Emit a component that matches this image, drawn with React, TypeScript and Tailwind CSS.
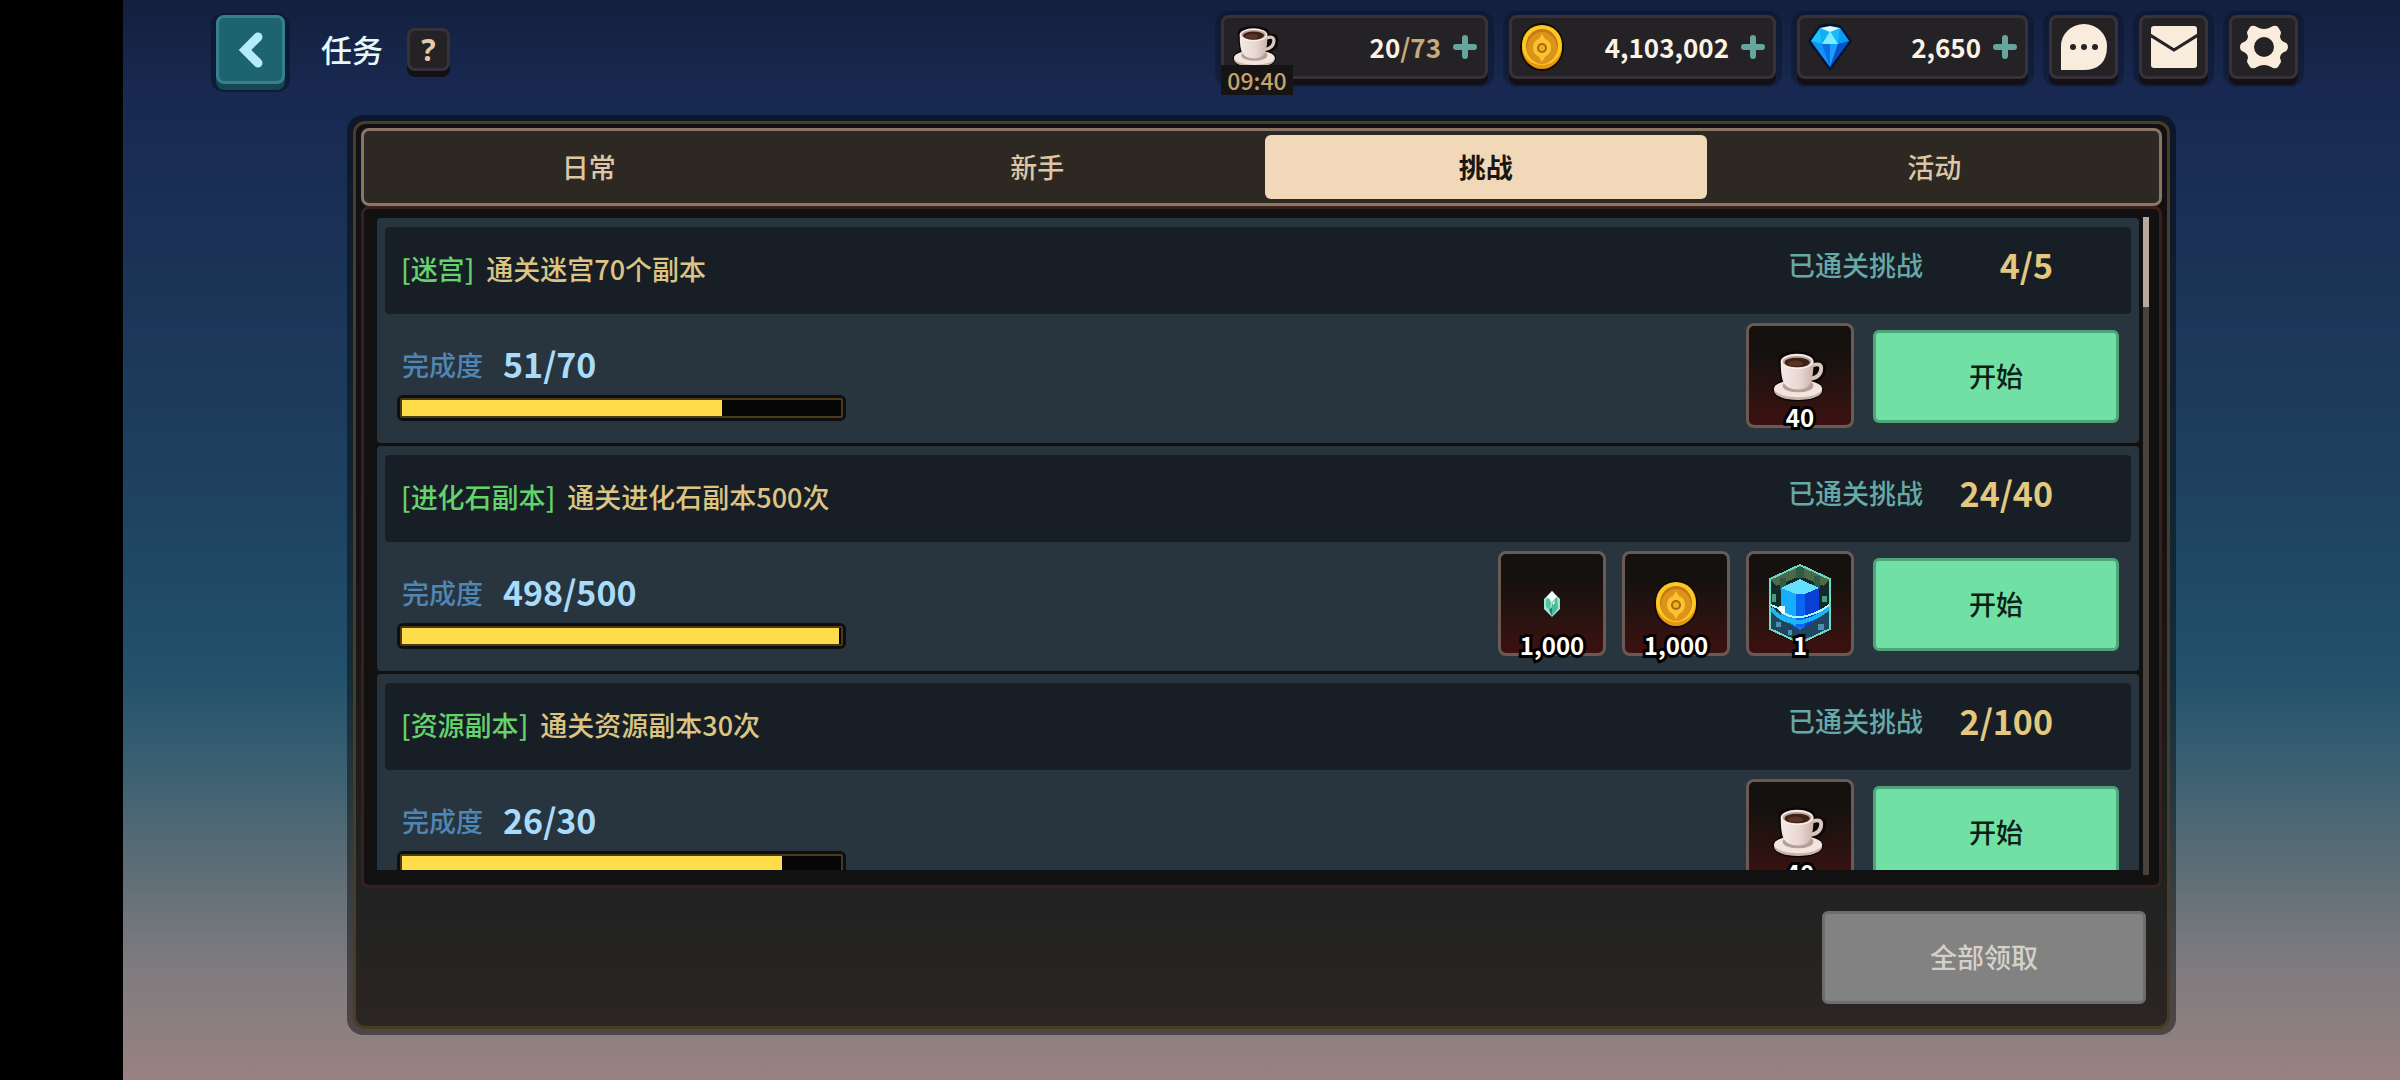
const TABS = ["日常", "新手", "挑战", "活动"];

const NUM = "font-['Noto_Sans_CJK_SC',sans-serif] font-bold";

type Reward = { kind: "coffee" | "gem" | "coin" | "cube"; amount: string };

type Quest = {
  tag: string;
  title: string;
  cleared: string;
  done: number;
  total: number;
  rewards: Reward[];
};

const QUESTS: Quest[] = [
  {
    tag: "迷宫",
    title: "通关迷宫70个副本",
    cleared: "4/5",
    done: 51,
    total: 70,
    rewards: [{ kind: "coffee", amount: "40" }],
  },
  {
    tag: "进化石副本",
    title: "通关进化石副本500次",
    cleared: "24/40",
    done: 498,
    total: 500,
    rewards: [
      { kind: "gem", amount: "1,000" },
      { kind: "coin", amount: "1,000" },
      { kind: "cube", amount: "1" },
    ],
  },
  {
    tag: "资源副本",
    title: "通关资源副本30次",
    cleared: "2/100",
    done: 26,
    total: 30,
    rewards: [{ kind: "coffee", amount: "40" }],
  },
];

function CoffeeIcon({ className }: { className?: string }) {
  return (
    <svg viewBox="0 0 58 54" className={className} aria-hidden="true">
      <defs>
        <linearGradient id="cup" x1="0" x2="1">
          <stop offset="0" stopColor="#f6eae6" />
          <stop offset="0.6" stopColor="#e8d5d0" />
          <stop offset="1" stopColor="#c9b2ac" />
        </linearGradient>
      </defs>
      <g stroke="#0b0807" strokeWidth="5" fill="#0b0807" strokeLinejoin="round">
        <ellipse cx="27" cy="41" rx="24" ry="10" />
        <path d="M9 11 Q9 4 26 4 Q43 4 43 11 L42 36 L12 36 Z" />
        <path d="M43 14 Q54 11 54 19 Q54 30 41 32" />
      </g>
      <ellipse cx="27" cy="42" rx="25" ry="10" fill="#c9b4ad" />
      <ellipse cx="27" cy="40" rx="25" ry="9" fill="#f3e5de" />
      <ellipse cx="27" cy="37" rx="16" ry="7" fill="#b5a09a" />
      <path d="M42 16 Q51 13 51 19 Q51 28 40 30" fill="none" stroke="#dbc5be" strokeWidth="4" />
      <path d="M9 12 Q9 28 12 34 Q16 41 27 41 Q37 41 40 34 Q43 28 43 12 Z" fill="url(#cup)" />
      <ellipse cx="26" cy="12" rx="17" ry="8" fill="#f8ede8" />
      <ellipse cx="26" cy="12" rx="15" ry="6" fill="#bfa59b" />
      <ellipse cx="26" cy="13" rx="13" ry="5" fill="#3b2117" />
      <ellipse cx="24" cy="14" rx="8" ry="3" fill="#5b3424" />
    </svg>
  );
}

function CoinIcon({ className }: { className?: string }) {
  return (
    <svg viewBox="0 0 44 48" className={className} aria-hidden="true">
      <ellipse cx="22" cy="24" rx="22" ry="24" fill="#120b04" />
      <ellipse cx="22" cy="25" rx="20" ry="21" fill="#e8960f" />
      <ellipse cx="22" cy="22" rx="20" ry="20" fill="#fcc822" />
      <ellipse cx="22" cy="23" rx="16" ry="17" fill="#c47a14" />
      <ellipse cx="22" cy="25" rx="15" ry="16" fill="#dd931b" />
      <path d="M22 11 L25 16 Q31 18 31 25 Q31 31 25 34 L22 39 L19 34 Q13 31 13 25 Q13 18 19 16 Z" fill="#fbc330" />
      <circle cx="22" cy="25" r="5" fill="#a8680f" />
      <circle cx="22" cy="25" r="3" fill="#eab02a" />
    </svg>
  );
}

function DiamondIcon({ className }: { className?: string }) {
  return (
    <svg viewBox="0 0 44 48" className={className} aria-hidden="true">
      <path d="M12 3 Q22 0 32 3 L43 18 L22 47 L1 18 Z" fill="#07142e" stroke="#07142e" strokeWidth="2" strokeLinejoin="round" />
      <path d="M12 5 L32 5 L41 18 L22 44 L3 18 Z" fill="#0a84f0" />
      <path d="M12 5 L3 18 L14 21 Z" fill="#19c4ff" />
      <path d="M32 5 L41 18 L30 21 Z" fill="#0b9cf5" />
      <path d="M12 5 L22 8 L14 21 Z" fill="#12aefc" />
      <path d="M32 5 L22 8 L30 21 Z" fill="#18b9ff" />
      <path d="M22 8 L14 21 L30 21 Z" fill="#7cecff" />
      <path d="M12 5 L22 3 L32 5 L22 9 Z" fill="#d5faff" />
      <path d="M3 18 L14 21 L22 44 Z" fill="#1492fb" />
      <path d="M14 21 L22 21 L22 44 Z" fill="#0a6fe4" />
      <path d="M22 21 L30 21 L22 44 Z" fill="#1e9dff" />
      <path d="M30 21 L41 18 L22 44 Z" fill="#0752c6" />
    </svg>
  );
}

function GemIcon({ className }: { className?: string }) {
  return (
    <svg viewBox="0 0 18 28" className={className} aria-hidden="true">
      <path d="M9 1 L17 9 L17 19 L9 27 L1 19 L1 9 Z" fill="#9fe6d2" />
      <path d="M9 1 L14 7 L9 12 L4 7 Z" fill="#f6fffd" />
      <path d="M9 12 L14 7 L15 18 L9 26 Z" fill="#4fb89d" />
      <path d="M3 10 L6 8 L8 13 L7 20 L3 17 Z" fill="#5cc0a6" />
      <path d="M6 20 L9 17 L9 26 Z" fill="#1f7f68" />
      <path d="M9 13 L12 10 L11 15 Z" fill="#d6fff4" />
    </svg>
  );
}

function CubeIcon({ className }: { className?: string }) {
  return (
    <svg viewBox="0 0 64 80" className={className} shapeRendering="crispEdges" aria-hidden="true">
      <path d="M32 1 L62 15 L62 65 L32 79 L2 65 L2 15 Z" fill="#122a2a" />
      <path d="M32 1 L62 15 L56 22 L32 12 L8 22 L2 15 Z" fill="#4d6a48" />
      <path d="M28 3 H36 V14 H28 Z M12 14 H18 V26 H12 Z M46 12 H52 V24 H46 Z" fill="#2f5a44" />
      <path d="M4 30 H8 V38 H4 Z M54 32 H59 V38 H54 Z" fill="#4a9a7c" />
      <path d="M2 44 L32 56 L62 44 L62 65 L32 79 L2 65 Z" fill="#204560" />
      <path d="M8 58 H13 V63 H8 Z M50 60 H56 V66 H50 Z M20 66 H24 V71 H20 Z" fill="#4d8fae" />
      <path d="M32 15 L51 26 L51 54 L32 66 L13 54 L13 26 Z" fill="#0c78f2" />
      <path d="M32 15 L51 24 L41 30 L22 30 L13 24 Z" fill="#62e2ff" />
      <path d="M13 24 L28 30 L28 62 L13 54 Z" fill="#16adff" />
      <path d="M28 30 H37 V63 H28 Z" fill="#0a66f0" />
      <path d="M37 30 L51 24 L51 54 L37 63 Z" fill="#0a3fd6" />
      <path d="M3 44 Q14 60 34 58 Q50 54 61 44" fill="none" stroke="#1cb6f5" strokeWidth="4" />
      <path d="M3 41 L10 44 Q20 55 34 53 Q50 50 61 41" fill="none" stroke="#aef4ff" strokeWidth="2" />
      <path d="M11 42 H17 V50 H14 V47 H11 Z" fill="#eaffff" />
      <path d="M32 1 L62 15 L62 65 L32 79 L2 65 L2 15 Z" fill="none" stroke="#69dbc0" strokeWidth="2" />
    </svg>
  );
}

function RewardIcon({ kind }: { kind: Reward["kind"] }) {
  if (kind === "coffee") return <CoffeeIcon className="w-14 h-[52px]" />;
  if (kind === "coin") return <CoinIcon className="w-11 h-12" />;
  if (kind === "gem") return <GemIcon className="w-[18px] h-7" />;
  return <CubeIcon className="w-16 h-20" />;
}

function PlusIcon() {
  return (
    <svg viewBox="0 0 24 24" className="w-6 h-6 shrink-0" aria-hidden="true">
      <path d="M12 3 V21 M3 12 H21" stroke="#66a59c" strokeWidth="6" strokeLinecap="round" />
    </svg>
  );
}

function ResourceBox({ width, icon, children }: { width: string; icon: React.ReactNode; children: React.ReactNode }) {
  return (
    <button
      type="button"
      className={`relative flex items-center h-16 px-2 rounded-lg bg-[#252226] border-[3px] border-[#37323a] shadow-[0_6px_0_#121016,0_2px_0_6px_rgba(10,14,30,0.35)] ${width}`}
    >
      {icon}
      <span className={`flex-1 pr-3 text-right text-[26px] leading-8 text-[#fbf3e6] ${NUM}`}>{children}</span>
      <PlusIcon />
    </button>
  );
}

function IconButton({ label, children }: { label: string; children: React.ReactNode }) {
  return (
    <button
      type="button"
      aria-label={label}
      className="flex items-center justify-center w-[69px] h-16 rounded-lg bg-[#252226] border-[3px] border-[#37323a] shadow-[0_6px_0_#121016,0_2px_0_6px_rgba(10,14,30,0.35)]"
    >
      {children}
    </button>
  );
}

function RewardBox({ reward }: { reward: Reward }) {
  return (
    <div className="relative flex items-center justify-center w-[108px] h-[105px] rounded-lg border-[3px] border-[#6b5a54] bg-linear-to-b from-[#14110f] from-25% to-[#3c1110]">
      <RewardIcon kind={reward.kind} />
      <span
        className={`absolute inset-x-0 -bottom-2 text-center text-2xl leading-8 text-white [paint-order:stroke_fill] [-webkit-text-stroke:6px_#000] ${NUM}`}
      >
        {reward.amount}
      </span>
    </div>
  );
}

function QuestCard({ quest }: { quest: Quest }) {
  return (
    <li className="shrink-0 h-[225px] px-2 pt-[9px] rounded-sm bg-[#29353e]">
      <div className="flex items-center h-[87px] pl-4 pr-[78px] pb-[2px] rounded-sm bg-[#181e26] text-[27px] font-medium">
        <h2 className="flex gap-3 text-[#dcc583]">
          <span className="text-[#65d36b]">[{quest.tag}]</span>
          {quest.title}
        </h2>
        <span className="ml-auto pb-2 text-[#66a9a7]">已通关挑战</span>
        <span className={`w-[130px] pb-[10px] text-right text-[34px] leading-10 text-[#e2c97f] ${NUM}`}>{quest.cleared}</span>
      </div>
      <div className="flex items-start px-3 pt-[9px]">
        <div className="w-[449px] pt-[22px]">
          <div className="flex items-center gap-5 pl-[5px] h-10">
            <span className="text-[27px] font-medium text-[#4f86b4]">完成度</span>
            <span className={`pb-[2px] text-[34px] leading-10 text-[#a9dcfb] ${NUM}`}>
              {quest.done}/{quest.total}
            </span>
          </div>
          <div className="mt-[10px] h-[26px] rounded-md bg-[#0d0f11] p-[3px]">
            <div className="h-5 rounded-xs border-2 border-[#4a3a1a] bg-[#060606]">
              <div className="h-4 bg-[#ffdd4a]" style={{ width: `${(quest.done / quest.total) * 100}%` }} />
            </div>
          </div>
        </div>
        <div className="ml-auto flex gap-4">
          {quest.rewards.map((reward) => (
            <RewardBox key={reward.kind} reward={reward} />
          ))}
        </div>
        <button
          type="button"
          className="ml-[19px] mt-[7px] w-[246px] h-[93px] rounded-md bg-[#70e0a4] border-[3px] border-[#4fa57a] text-[27px] font-medium text-[#0c2016]"
        >
          开始
        </button>
      </div>
    </li>
  );
}

export default function App() {
  return (
    <div className="flex h-screen overflow-hidden bg-black pl-[123px] font-['Noto_Sans_CJK_SC',sans-serif]">
      <div className="flex flex-1 flex-col bg-[linear-gradient(to_bottom,#141f3d_0%,#182850_8%,#1b3356_25%,#1e4160_45%,#22506a_62%,#3a6072_71%,#5c6d76_80%,#807c7f_90%,#998280_100%)]">
        <header className="flex items-start pl-[93px] pr-[102px] pt-[15px] h-[115px] shrink-0">
          <button
            type="button"
            aria-label="返回"
            className="flex items-center justify-center w-[69px] h-[69px] rounded-lg bg-[#1e6370] border-[3px] border-[#35808c] shadow-[0_6px_0_#16464f,0_3px_0_5px_rgba(10,20,40,0.6)]"
          >
            <svg viewBox="0 0 24 36" className="w-6 h-9" aria-hidden="true">
              <path d="M19 5 L6 18 L19 31" fill="none" stroke="#b5ecfa" strokeWidth="9" strokeLinecap="round" />
            </svg>
          </button>
          <h1 className="ml-9 text-[31px] leading-[67px] font-medium text-[#e4fafa]">任务</h1>
          <button
            type="button"
            aria-label="帮助"
            className="ml-6 mt-[13px] w-[43px] h-[43px] rounded-lg bg-[#252226] border-[3px] border-[#37323a] shadow-[0_6px_0_#121016] text-3xl leading-8 font-bold text-[#e6c9a8] font-['Noto_Sans',sans-serif]"
          >
            ?
          </button>
          <div className="ml-auto flex gap-[21px]">
            <ResourceBox width="w-[267px]" icon={<CoffeeIcon className="w-12 h-11" />}>
              20<span className="text-[#c5aa7c]">/73</span>
              <span className="absolute -left-[3px] top-[47px] w-[72px] h-[30px] bg-[#171416] text-center text-[23px] leading-[30px] font-medium text-[#c5a36d]">
                09:40
              </span>
            </ResourceBox>
            <ResourceBox width="w-[267px]" icon={<CoinIcon className="w-11 h-12" />}>4,103,002</ResourceBox>
            <ResourceBox width="w-[231px]" icon={<DiamondIcon className="w-11 h-12" />}>2,650</ResourceBox>
            <IconButton label="聊天">
              <svg viewBox="0 0 46 46" className="w-[46px] h-[46px]" aria-hidden="true">
                <path d="M0 46 V22 A23 22 0 0 1 46 22 Q46 46 22 46 Z" fill="#faecdc" />
                <circle cx="12" cy="23" r="3" fill="#252226" />
                <circle cx="23" cy="23" r="3" fill="#252226" />
                <circle cx="34" cy="23" r="3" fill="#252226" />
              </svg>
            </IconButton>
            <IconButton label="邮件">
              <svg viewBox="0 0 46 42" className="w-[46px] h-[42px]" aria-hidden="true">
                <rect width="46" height="42" rx="3" fill="#faecdc" />
                <path d="M-1 9 L23 24 L47 9" fill="none" stroke="#252226" strokeWidth="3" />
              </svg>
            </IconButton>
            <IconButton label="设置">
              <svg viewBox="0 0 48 44" className="w-12 h-11" aria-hidden="true">
                <path
                  d="M10 2 Q12 0 15 1 L19 3 Q24 5 29 3 L33 1 Q36 0 38 2 L41 7 Q41 9 40 11 Q40 15 44 17 Q48 18 48 22 Q48 26 44 27 Q40 29 40 33 Q41 35 41 37 L38 42 Q36 44 33 43 L29 41 Q24 39 19 41 L15 43 Q12 44 10 42 L7 37 Q7 35 8 33 Q8 29 4 27 Q0 26 0 22 Q0 18 4 17 Q8 15 8 11 Q7 9 7 7 Z"
                  fill="#faecdc"
                />
                <circle cx="24" cy="22" r="10" fill="#252226" />
              </svg>
            </IconButton>
          </div>
        </header>

        <main className="mx-auto flex w-[calc(100%-448px)] flex-col h-[920px] rounded-2xl bg-black/45 p-[6px]">
          <div className="flex flex-1 flex-col rounded-xl border-[3px] border-[#4a3d22] bg-linear-to-b from-[#111015] from-40% via-[#202221] via-85% to-[#2b2523] pt-1 px-[5px] pb-[22px]">
            <nav className="flex gap-[7px] h-[78px] p-1 rounded-lg border-[3px] border-[#8b7565] bg-[#2e2822]">
              {TABS.map((tab) => (
                <button
                  key={tab}
                  type="button"
                  className={
                    tab === "挑战"
                      ? "flex-1 rounded-md bg-[#f0d8b8] text-[27px] font-bold text-[#1c1610]"
                      : "flex-1 rounded-md text-[27px] font-medium text-[#dcc6a6]"
                  }
                >
                  {tab}
                </button>
              ))}
            </nav>

            <section className="flex h-[682px] gap-1 rounded-lg border-[3px] border-[#3a201c] bg-[#111111] pt-2 pl-[13px] pr-[10px] pb-[10px]">
              <ul className="flex flex-1 flex-col gap-[3px] overflow-hidden h-[653px] pt-px">
                {QUESTS.map((quest) => (
                  <QuestCard key={quest.tag} quest={quest} />
                ))}
              </ul>
              <div className="w-[6px] bg-[#4a403c]">
                <div className="h-[90px] bg-[#b5a9a0]" />
              </div>
            </section>

            <button
              type="button"
              disabled
              className="mt-[23px] mr-4 ml-auto w-[324px] h-[93px] rounded-md border-[3px] border-[#6d6d6d] bg-[#828282] text-[27px] font-medium text-[#d6d1c8]"
            >
              全部领取
            </button>
          </div>
        </main>
      </div>
    </div>
  );
}
